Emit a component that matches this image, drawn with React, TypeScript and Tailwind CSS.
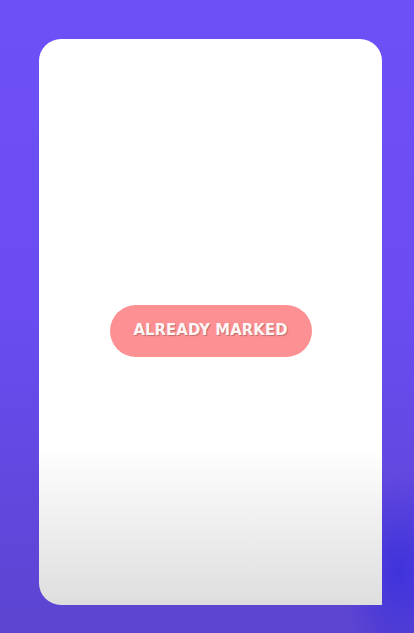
const App = () => {
  return (
    <div className="relative h-[633px] w-full overflow-hidden bg-gradient-to-b from-[#6e50f7] via-[#6a4cf0] to-[#5c44d0] pt-[39px] pl-[39px]">
      {/* Corner glow */}
      <div className="absolute -bottom-[40px] -right-[40px] h-[200px] w-[110px] rounded-full bg-[radial-gradient(closest-side,#3a30dc,transparent)] opacity-90" />

      {/* Card */}
      <div className="relative flex h-[566px] w-[343px] items-center justify-center rounded-t-[22px] rounded-bl-[22px] bg-gradient-to-b from-white from-[72%] to-[#dedede]">
        <button className="mt-[17px] h-[52px] w-[202px] rounded-full bg-[#fd9093] text-[16.5px] font-bold tracking-[0.1px] text-[#fdf6f6] [font-family:'DejaVu_Sans_Condensed','Liberation_Sans_Narrow',sans-serif] [text-shadow:1px_1px_1px_rgba(0,0,0,0.25)]">
          ALREADY MARKED
        </button>
      </div>
    </div>
  );
};

export default App;
